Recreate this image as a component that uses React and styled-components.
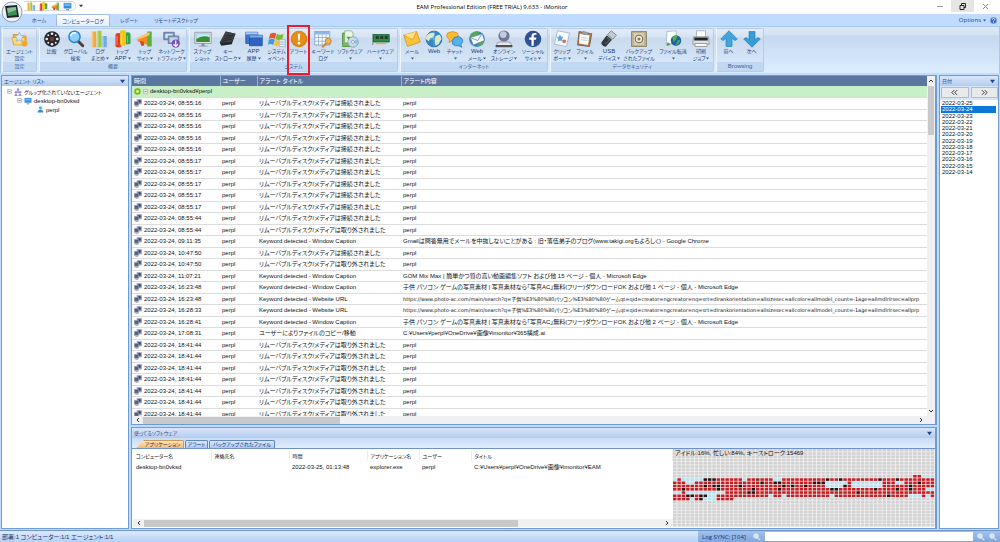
import React from 'react'
import styled, { createGlobalStyle, css } from 'styled-components'

const GlobalStyle = createGlobalStyle`
  * { box-sizing: border-box; }
  body {
    margin: 0;
    overflow: hidden;
    font-family: "Liberation Sans", "Noto Sans CJK JP", sans-serif;
    font-size: 6px;
    line-height: 8px;
    font-feature-settings: "palt";
    color: #111;
  }
  button, input { font: inherit; font-feature-settings: inherit; color: inherit; padding: 0; margin: 0; border: 0; background: none; }
  a { color: inherit; text-decoration: none; }
  ul { list-style: none; margin: 0; padding: 0; }
  svg { display: block; flex: none; }
`

const Window = styled.div`
  position: relative;
  display: flex;
  flex-direction: column;
  height: 100vh;
  background: #bfdbff;
`
const TitleBar = styled.header`
  display: flex;
  height: 14px;
  padding-left: 24px;
  background: #fff;
`
const Orb = styled.button`
  position: absolute;
  left: 1px;
  top: 1px;
  z-index: 2;
`
const QuickAccess = styled.div`
  display: flex;
  align-items: center;
  justify-content: space-around;
  width: 52px;
  height: 10px;
  margin-top: 1px;
  padding: 0 2px;
  border: 1px solid #d4d8de;
  border-left: 0;
  border-radius: 0 5px 5px 0;
`
const More = styled.button`
  width: 10px;
  height: 12px;
  padding-left: 3px;
`
const Title = styled.h1`
  flex: 1;
  margin: 0;
  padding-right: 30px;
  font-family: "Open Sans", sans-serif;
  font-size: 6px;
  font-weight: 400;
  line-height: 14px;
  text-align: center;
  color: #000;
`
const WindowButton = styled.button`
  display: flex;
  align-items: center;
  justify-content: center;
  width: 23px;
  height: 12px;
  background: ${p => (p.$on ? '#e5e5e5' : 'none')};
`
const WindowButtons = styled.div`
  display: flex;
  padding-right: 3px;
`

const TabStrip = styled.nav`
  display: flex;
  height: 12px;
  padding: 0 3px 0 22px;
  color: #1f3f85;
`
const Tab = styled.button`
  width: ${p => p.$w}px;
  height: 12px;
  border-radius: 2px 2px 0 0;
  font-size: 5px;
  ${p => p.$active && css`
    border: 1px solid #9dbde8;
    border-bottom: 0;
    background: linear-gradient(#fff, #e3eefb);
  `}
`
const Options = styled.div`
  display: flex;
  align-items: center;
  gap: 4px;
  margin-left: auto;
`
const OptionsButton = styled.button`
  display: flex;
  align-items: center;
  gap: 2px;
  font-family: "Open Sans", sans-serif;
`

const Ribbon = styled.div`
  display: flex;
  gap: 2px;
  height: 47px;
  padding: 1px;
  border: 1px solid #a9c8ee;
  border-width: 1px 1px 0;
  background: linear-gradient(#dde8f5 0, #d3e1f1 8px, #c6d8ee 9px, #dbedff 100%);
`
const Group = styled.section`
  display: flex;
  flex-direction: column;
  border: 1px solid #b4cdea;
  border-left-color: #edf5fe;
  border-radius: 2px;
  background: linear-gradient(#e3ecf7 0, #d6e3f2 8px, #c9daee 9px, #d9eafc 100%);
`
const GroupButtons = styled.div`
  display: flex;
  flex: 1;
`
const GroupName = styled.div`
  height: 9px;
  line-height: 9px;
  background: #c1d8f2;
  color: #3d5f9f;
  font-size: ${p => (p.$latin ? 6 : 5)}px;
  text-align: center;
`
const Tool = styled.button`
  position: relative;
  display: flex;
  flex-direction: column;
  align-items: center;
  justify-content: flex-start;
  width: ${p => p.$w}px;
  padding-top: 1px;
  line-height: 7px;
  color: #1f3f85;
  white-space: nowrap;
`
const ToolLine = styled.span`
  display: flex;
  align-items: center;
  justify-content: center;
  gap: 1px;
  height: 7px;
  font-size: ${p => (p.$latin ? 6 : 5)}px;
`
const Highlight = styled.span`
  position: absolute;
  left: 0;
  top: -4px;
  z-index: 1;
  width: 23px;
  height: 50px;
  border: 2px solid #ec1c2c;
`

const Workspace = styled.main`
  display: flex;
  gap: 2px;
  flex: 1;
  min-height: 0;
  padding: 2px 1px 1px;
`
const Panel = styled.section`
  display: flex;
  flex-direction: column;
  min-width: 0;
  min-height: 0;
  width: ${p => p.$w || 'auto'};
  flex: ${p => p.$flex || 'none'};
  border: 1px solid #6f9bd6;
  border-right-width: ${p => (p.$thick ? '2px' : '1px')};
  background: #fff;
`
const PanelTitle = styled.div`
  display: flex;
  align-items: center;
  justify-content: space-between;
  flex: none;
  height: 10px;
  padding: 0 3px 0 2px;
  background: linear-gradient(#d8e6fa, #b3cdee);
  font-size: 5px;
  color: #24478f;
`
const Tree = styled.ul`
  padding: 1px 0 0 5px;
`
const TreeItem = styled.li`
  display: flex;
  align-items: center;
  gap: 2px;
  height: 9px;
  padding-left: ${p => p.$level * 10}px;
  font-size: ${p => (p.$level ? 6 : 5)}px;
  white-space: nowrap;
`

const Center = styled.div`
  display: flex;
  flex-direction: column;
  flex: 1;
  gap: 2px;
  min-width: 0;
`
const LogArea = styled.div`
  display: grid;
  grid-template-columns: 1fr 8px;
  grid-template-rows: 1fr 8px;
  flex: 1;
  min-height: 0;
`
const TableClip = styled.div`
  min-width: 0;
  min-height: 0;
  overflow: hidden;
`
const LogTable = styled.table`
  width: 100%;
  table-layout: fixed;
  border-collapse: collapse;
  white-space: nowrap;
  th {
    height: 10px;
    padding: 0 0 0 2px;
    border-left: 1px solid #9db0cf;
    background: #5c779f;
    color: #fff;
    font-weight: 400;
    line-height: 10px;
    text-align: left;
  }
  th:first-child { border-left: 0; }
  td {
    height: 12px;
    padding: 0 0 0 2px;
    border-bottom: 1px solid #dcdcdc;
    line-height: 10px;
    overflow: hidden;
  }
  tbody tr:nth-child(odd) td { height: 11px; }
`
const Col = styled.col`
  width: ${p => (p.$w ? p.$w + 'px' : 'auto')};
`
const GroupRow = styled.tr`
  td { background: #c9efc6; }
`
const Address = styled.span`
  font-family: "DejaVu Sans", "Noto Sans CJK JP", sans-serif;
  font-size: 5px;
`
const IconCell = styled.div`
  display: flex;
  align-items: center;
  gap: 2px;
`
const BarV = styled.div`
  display: flex;
  flex-direction: column;
  align-items: center;
  justify-content: space-between;
  padding: 2px 0;
  background: #f0f0f0;
`
const BarH = styled.div`
  display: flex;
  align-items: center;
  height: 8px;
  padding: 0 3px;
  background: #f0f0f0;
`
const ThumbV = styled.div`
  width: 6px;
  height: 49px;
  margin: 2px 0 auto;
  background: #c9c9c9;
`
const ThumbH = styled.div`
  width: ${p => p.$w};
  height: 7px;
  margin: 0 auto 0 2px;
  background: #c9c9c9;
`

const LowerTabs = styled.div`
  display: flex;
  gap: 1px;
  flex: none;
  height: 11px;
  padding: 2px 0 0 4px;
  border-bottom: 1px solid #6f93c8;
  background: linear-gradient(#c9dcf5, #e1edfc);
`
const LowerTab = styled.button`
  height: 8px;
  width: ${p => p.$w}px;
  border-radius: 2px 2px 0 0;
  border: 1px solid #5f86c4;
  border-bottom: 0;
  background: linear-gradient(#dbe9fc, #a9c8f2);
  font-size: 5px;
  line-height: 7px;
  color: #0f2d69;
  white-space: nowrap;
  ${p => p.$active && css`
    padding-left: 6px;
    border-color: #c99a5a;
    border-left: 0;
    background: linear-gradient(#ffe2b5, #fbbb6a);
    clip-path: polygon(8px 0, 100% 0, 100% 100%, 0 100%);
  `}
`
const LowerBody = styled.div`
  display: flex;
  flex: 1;
  min-height: 0;
  padding: 0 0 1px 1px;
`
const LowerTableArea = styled.div`
  display: flex;
  flex-direction: column;
  flex: 1;
  min-width: 0;
  padding-top: 1px;
`
const AppTable = styled.table`
  width: 100%;
  margin-bottom: auto;
  table-layout: fixed;
  border-collapse: collapse;
  white-space: nowrap;
  th, td {
    height: 11px;
    padding: 0 0 0 3px;
    font-weight: 400;
    text-align: left;
  }
  th {
    border-right: 1px solid #ededed;
    font-size: 5px;
  }
`
const Activity = styled.div`
  position: relative;
  width: 262px;
  background: #f1f1f1;
`
const ActivityLabel = styled.div`
  position: absolute;
  left: 2px;
  top: 0;
`

const DateNav = styled.div`
  display: flex;
  gap: 2px;
  flex: none;
  padding: 1px 0 2px 1px;
  background: #d6e5fa;
`
const DateButton = styled.button`
  display: flex;
  align-items: center;
  justify-content: center;
  flex: 1;
  height: 11px;
  border: 1px solid #b5bcc6;
  background: #e9eaec;
`
const DateList = styled.ul`
  display: grid;
  grid-template-rows: repeat(12, 1fr);
  height: 75px;
  margin: 0 2px 0 1px;
`
const DateItem = styled.li`
  padding-left: 1px;
  line-height: 6px;
  background: ${p => (p.$on ? '#0b78d7' : 'transparent')};
  color: ${p => (p.$on ? '#fff' : '#111')};
`

const StatusBar = styled.footer`
  display: flex;
  flex: none;
  height: 12px;
  border-top: 1px solid #6f93c8;
  background: linear-gradient(#dcebff, #b6d0f4);
  line-height: 12px;
  color: #17356f;
`
const StatusText = styled.div`
  flex: 1;
  padding-left: 2px;
`
const SyncArea = styled.label`
  display: flex;
  align-items: center;
  gap: 4px;
  width: 302px;
  padding: 0 3px 0 4px;
  background: linear-gradient(#a3c2ec, #7ea7df);
`
const SyncName = styled.span`
  width: 47px;
  font-family: "Open Sans", sans-serif;
`
const SyncInput = styled.input`
  flex: 1;
  min-width: 0;
  height: 9px;
  background: #fff;
`

const icons = {
  agent: <><path d="M3 6h7l2 2h8v11H3z" fill="#f2b33a" stroke="#d18c1c" /><path d="M1 10h17l3 10H4z" fill="#fbd878" stroke="#dea036" /><path d="m11 3 2 4 4 1-3 3 1 4-4-2-4 2 1-4-3-3 4-1z" fill="#d6e9fb" stroke="#85add9" /><circle cx="18" cy="18" r="4" fill="#f6a62c" /></>,
  reel: <><circle cx="12" cy="12" r="10.500" fill="#24272c" /><g fill="#e6ebf2"><circle cx="12" cy="5" r="1.800" /><circle cx="12" cy="19" r="1.800" /><circle cx="5" cy="12" r="1.800" /><circle cx="19" cy="12" r="1.800" /><circle cx="7" cy="7" r="1.300" /><circle cx="17" cy="7" r="1.300" /><circle cx="7" cy="17" r="1.300" /><circle cx="17" cy="17" r="1.300" /></g><circle cx="12" cy="12" r="3" fill="#6c3e2b" /></>,
  search: <><path d="m14 14 7 7" stroke="#4b423f" strokeWidth="4" strokeLinecap="round" /><circle cx="10" cy="9" r="7.500" fill="#8fd0fa" stroke="#2b83cd" strokeWidth="2" /><path d="M5 8a5 5 0 0 1 7-4" stroke="#fff" strokeWidth="2" fill="none" /></>,
  logs: <><path d="M1 2h6v21H1z" fill="#f4a83c" /><path d="M8 1h6v22H8z" fill="#9bcc36" /><path d="M15 8h6v15h-6z" fill="#70a9e6" /><path d="M1 2h2v21H1zM8 1h2v22H8zM15 8h2v15h-2z" fill="#fff" opacity=".35" /></>,
  topapp: <><path d="M2 7a4 3 0 0 1 8 0v14a4 2 0 0 1-8 0z" fill="#e8392b" /><path d="M14 6a4 3 0 0 1 8 0v11a4 2 0 0 1-8 0z" fill="#35a544" /><path d="M8 3a4 3 0 0 1 8 0v16a4 2 0 0 1-8 0z" fill="#f4c51e" /><path d="M4 8v12M10 5v14M18 8v9" stroke="#fff" opacity=".5" /></>,
  topsite: <><path d="M2 11 18 3v18L2 15z" fill="#f38b25" /><path d="M15 2h6v20h-6z" fill="#5caf3a" /><path d="M2 11 18 3v4L2 13z" fill="#fbc36c" /><path d="M5 15h5l1 6H7z" fill="#d64524" /></>,
  network: <><path d="M1 3h14v10H1z" fill="#7c95bb" stroke="#55698f" /><path d="M3 5h10v6H3z" fill="#cfe3f7" /><path d="M7 8h14v10H7z" fill="#8fa4c4" stroke="#55698f" /><path d="M9 10h10v6H9z" fill="#bfd7f0" /><circle cx="17" cy="18" r="5.500" fill="#7b50b8" /><path d="M17 14v8M14 19l3 3 3-3" stroke="#fff" fill="none" strokeWidth="1.500" /></>,
  snapshot: <><path d="M1 3h22v15H1z" fill="#dfe4e8" stroke="#848d93" /><path d="M3 5h18v11H3z" fill="#3c8c33" /><path d="M3 5h18v5q-9-4-18 2z" fill="#bde7fa" /><path d="M10 18h4v3h4v1H6v-1h4z" fill="#899097" /></>,
  key: <><path d="M9 2 22 5l-5 14-14 2-2-4z" fill="#23262a" /><path d="M9 2 22 5l-5 11-16 1z" fill="#3e4248" /><path d="m6 12 12-3M4 15l13-3M8 8l12-1" stroke="#24262b" /></>,
  app: <><path d="M1 3h16v15H1z" fill="#3c74ce" stroke="#244f9c" /><path d="M1 3h16v3H1z" fill="#a8caf3" /><path d="M6 7h17v14H6z" fill="#2f63c2" stroke="#1e4793" /><path d="M6 7h17v3H6z" fill="#7aa9e8" /></>,
  windows: <><path d="M3 5q5-3 8 0l-2 7q-4-3-8 0z" fill="#e8572d" /><path d="M12 5q4 3 9 0l-2 7q-5 3-9 0z" fill="#7fba34" /><path d="M1 13q4-3 8 0l-2 7q-4-3-7 0z" fill="#4298de" /><path d="M10 13q4 3 9 0l-2 7q-5 3-9 0z" fill="#f8c32c" /><path d="M15 13h8v9h-8z" fill="#f4f7fb" stroke="#9caabd" /><path d="M16 16h6M16 19h6" stroke="#6a95cf" /></>,
  alert: <><circle cx="12" cy="12" r="11" fill="#d9820f" /><circle cx="12" cy="11" r="9.500" fill="#e28e18" /><path d="M10.500 5h3l-.5 9h-2z" fill="#fff" /><circle cx="12" cy="17.500" r="1.700" fill="#fff" /></>,
  keyword: <><path d="M1 2h20v18H1z" fill="#f8fbff" stroke="#6e94c5" /><path d="M1 2h20v4H1z" fill="#8db7e8" /><path d="M1 10h20M1 15h20M6 6v14M11 6v14M16 6v14" stroke="#8ba8cb" /><circle cx="19" cy="15" r="4" fill="#f2b34c" stroke="#b7761d" /><path d="m16 18-5 5" stroke="#c98a2d" strokeWidth="2.500" /></>,
  software: <><path d="M2 4h12v18H2z" fill="#6fbd57" stroke="#458b3a" /><path d="M5 1h9l2 3v13H5z" fill="#eaf5e5" stroke="#84a77c" /><path d="M7 9h6l-3 4z" fill="#4aa336" /><circle cx="16" cy="16" r="7" fill="#c9dbeb" stroke="#7897b7" /><path d="m16 16 6-4a7 7 0 0 1 0 7z" fill="#85c4e8" /><circle cx="16" cy="16" r="2" fill="#fff" stroke="#8192a5" /></>,
  hardware: <><path d="M0 5h2v15H0z" fill="#96a0a6" /><path d="M2 6h21v10H2z" fill="#2b8e48" stroke="#14542a" /><path d="M5 8h4v4H5zM11 8h4v4h-4zM17 8h4v4h-4z" fill="#243b32" /><path d="M5 17h14v2H5z" fill="#d7b548" /></>,
  mail: <><path d="m1 7 17-5 5 14-17 6z" fill="#fbc437" stroke="#d38b19" /><path d="m1 7 12 6 5-11" fill="#fde084" stroke="#d89626" /></>,
  web: <><circle cx="12" cy="12" r="10.500" fill="#2f88c9" stroke="#1d5e98" /><path d="M5 5q6-3 8 0l-2 5-4 1-2 4-4-3q0-5 4-7M14 8l6-2 2 6-4 7-4 2-1-6z" fill="#dceacb" /><path d="M12 2v20M2 12h20" stroke="#bce0f7" opacity=".6" /></>,
  chat: <><path d="M2 4q7-4 13 0 4 5 0 9-4 2-7 1l-4 3 1-4Q-1 9 2 4" fill="#f9bc32" stroke="#d98a1c" /><path d="M11 10q6-3 10 1 3 5-1 8l1 4-4-2q-5 1-8-2-3-5 2-9" fill="#54b1ec" stroke="#2577bd" /></>,
  webmail: <><circle cx="12" cy="12" r="10.500" fill="#3b83bf" /><path d="M3 6q7-6 12-3l-3 5-9 5zM15 16l7-4-3 8-7 2z" fill="#54ab52" /><path d="m3 10 16-5 3 9-15 6z" fill="#f6faff" stroke="#5d84ab" /><path d="m3 10 10 4 6-9" fill="none" stroke="#5d84ab" /></>,
  storage: <><circle cx="12" cy="8" r="7.500" fill="#707796" /><circle cx="11" cy="6" r="4.500" fill="#c2cadd" /><path d="M4 16h16l3 6H1z" fill="#e3e6ea" stroke="#8b9298" /><path d="M1 20h22v3H1z" fill="#4b5157" /></>,
  facebook: <><circle cx="12" cy="12" r="11" fill="#31508f" /><path d="M13 21v-8h3l.5-3H13V8q0-2 3.500-1.500V4Q10 3 10 8v2H7v3h3v8z" fill="#fff" /></>,
  clip: <><path d="m6 1 16 3-4 18L2 19z" fill="#fafcff" stroke="#91aacd" /><path d="m9 6 2 3 3 0-2 3 1 3-4-1-3 2 1-4-2-3h3z" fill="#62a3df" /><circle cx="15" cy="15" r="2.500" fill="#e36e41" /></>,
  file: <><path d="m4 2 17 3-3 17-16-2z" fill="#a97a54" stroke="#76502f" /><path d="m5 5 13 2-2 13-12-2z" fill="#fafafa" /><path d="m9 1 7 2-1 4-7-1z" fill="#969ca3" /><path d="m7 10 8 1M7 13l8 1" stroke="#b6bcc6" /></>,
  usb: <><path d="m15 1 7 6-5 5-7-6z" fill="#c5cbd1" stroke="#6b7075" /><path d="m9 7 7 6-8 9q-3 1-6-3-1-2 1-4z" fill="#333940" /><path d="m9 10 4 3-6 6" stroke="#777f88" fill="none" /></>,
  backup: <><path d="M2 2h20v20H2z" fill="#b9ae8e" stroke="#81775a" /><path d="M5 4h14v16H5z" fill="#d7cfb4" /><circle cx="12" cy="12" r="5" fill="#eee9d5" stroke="#766d52" strokeWidth="1.500" /><circle cx="12" cy="12" r="2" fill="#827758" /></>,
  transfer: <><path d="m4 2 12-1 1 16-14 2z" fill="#fcfdfe" stroke="#9eafc3" /><circle cx="16" cy="14" r="7" fill="#205fae" /><path d="M11 10q4-5 7-2l-2 5-3 3zM18 14l4-1-3 6-3 1z" fill="#52b147" /><path d="m3 21 2-5 4 4z" fill="#49a43f" /></>,
  print: <><path d="M6 1h12v9H6z" fill="#fff" stroke="#9ca3aa" /><path d="M2 9h20l1 10H1z" fill="#dde1e4" stroke="#858b90" /><path d="M3 10h18v4H3z" fill="#22262b" /><path d="M4 18h16v4H4z" fill="#f8f8f8" stroke="#888" /></>,
  up: <path d="M12 1 23 12l-3 2-4-3v11H8V11l-4 3-3-2z" fill="#41a6dc" stroke="#2b86bd" />,
  down: <path d="M12 23 1 12l3-2 4 3V2h8v11l4-3 3 2z" fill="#369cd6" stroke="#2b86bd" />,
  monitor: <><path d="M2 3h20v14H2z" fill="#2c8ae0" stroke="#7aa6d0" /><path d="M4 5h16v6H4z" fill="#65b8f3" /><path d="M8 19h8v3H8z" fill="#7c8c9b" /></>,
  group: <><circle cx="12" cy="5" r="4" fill="#8aa0dc" /><path d="M6 14q6-9 12 0z" fill="#7084cd" /><circle cx="6" cy="13" r="4" fill="#a78bc9" /><circle cx="18" cy="13" r="4" fill="#a78bc9" /><path d="M0 23q6-10 12 0q6-10 12 0z" fill="#8577c1" /></>,
  user: <><circle cx="12" cy="7" r="6" fill="#57b6ee" /><path d="M2 22q1-9 10-9t10 9z" fill="#2e8fd6" /></>,
  screens: <><path d="M9 1h14v14H9z" fill="#8c9ac4" stroke="#a7a7ad" strokeWidth="2" /><path d="M12 4h8v7h-8z" fill="#26366f" /><path d="M1 7h13v12H1z" fill="#54617e" stroke="#a2a7b5" strokeWidth="2" /><path d="M4 20h9v3H4z" fill="#899" /></>,
  plus: <><circle cx="12" cy="12" r="11" fill="#74b91c" /><circle cx="12" cy="12" r="5" fill="#e3fa9e" /></>,
  help: <><circle cx="12" cy="12" r="11" fill="#3264c2" stroke="#9eb9e6" strokeWidth="2" /><path d="M8 9q0-4 4-4t4 4q0 2-4 5v2M12 18v2" fill="none" stroke="#fff" strokeWidth="3" /></>,
  find: <><path d="m14 14 8 8" stroke="#e8dcc0" strokeWidth="4" /><circle cx="9" cy="9" r="7" fill="#cfe3f8" stroke="#eef4fb" strokeWidth="2" /></>,
  expand: <><path d="M3 3h18v18H3z" fill="#fff" stroke="#8c96a3" strokeWidth="3" /><path d="M7 12h10" stroke="#445" strokeWidth="3" /></>,
  prev: <path d="M11 4 3 12l8 8M21 4l-8 8 8 8" stroke="#222" strokeWidth="3" />,
  next: <path d="m3 4 8 8-8 8M13 4l8 8-8 8" stroke="#222" strokeWidth="3" />,
}

const Icon = ({ name, size = 18 }) => (
  <svg width={size} height={size} viewBox="0 0 24 24" fill="none">{icons[name]}</svg>
)
const Caret = ({ w = 3, color = '#34528f' }) => (
  <svg width={w} height={w} viewBox="0 0 6 6"><path d="M0 1h6L3 5z" fill={color} /></svg>
)
const chevrons = { up: 'M1 4l2-2 2 2', down: 'M1 2l2 2 2-2', left: 'M4 1L2 3l2 2', right: 'M2 1l2 2-2 2' }
const Chevron = ({ dir }) => (
  <svg width="6" height="6" viewBox="0 0 6 6"><path d={chevrons[dir]} fill="none" stroke="#333" /></svg>
)

const isLatin = text => /^[A-Za-z]/.test(text)

// [icon, button width, label lines, has drop-down]
const groups = [
  ['設定', [['agent', 33, ['エージェント', '設定']]]],
  ['概要', [
    ['reel', 23, ['比較']],
    ['search', 25, ['グローバル', '検索']],
    ['logs', 24, ['ログ', 'まとめ'], 1],
    ['topapp', 21, ['トップ', 'APP'], 1],
    ['topsite', 24, ['トップ', 'サイト'], 1],
    ['network', 29, ['ネットワーク', 'トラフィック'], 1],
  ]],
  ['システム', [
    ['snapshot', 25, ['スナップ', 'ショット']],
    ['key', 26, ['キー', 'ストローク'], 1],
    ['app', 25, ['APP', '履歴'], 1],
    ['windows', 21, ['システム', 'イベント']],
    ['alert', 23, ['アラート']],
    ['keyword', 26, ['キーワード', 'ログ']],
    ['software', 28, ['ソフトウェア'], 1],
    ['hardware', 33, ['ハードウェア'], 1],
  ]],
  ['インターネット', [
    ['mail', 22, ['メール'], 1],
    ['web', 22, ['Web']],
    ['chat', 20, ['チャット'], 1],
    ['webmail', 24, ['Web', 'メール'], 1],
    ['storage', 30, ['オンライン', 'ストレージ'], 1],
    ['facebook', 28, ['ソーシャル', 'サイト'], 1],
  ]],
  ['データセキュリティ', [
    ['clip', 22, ['クリップ', 'ボード'], 1],
    ['file', 24, ['ファイル'], 1],
    ['usb', 24, ['USB', 'デバイス'], 1],
    ['backup', 36, ['バックアップ', 'されたファイル']],
    ['transfer', 32, ['ファイル転送'], 1],
    ['print', 24, ['印刷', 'ジョブ'], 1],
  ]],
  ['Browsing', [['up', 23, ['前へ']], ['down', 23, ['次へ']]]],
]

const plugged = 'リムーバブルディスク/メディアは接続されました'
const unplugged = 'リムーバブルディスク/メディアは取り外されました'
const caption = 'Keyword detected - Window Caption'
const website = 'Keyword detected - Website URL'
const photoUrl = 'https://www.photo-ac.com/main/search?q=子供%E3%80%80パソコン%E3%80%80ゲームqt=qid=creator=ngcreator=nq=srt=dlrankorientation=allsizesec=allcolor=allmodel_count=-1age=allmdlrlrsec=allprp'

const logs = [
  ...Array(5).fill(['08:55:16', plugged, 'perpl']),
  ...Array(5).fill(['08:55:17', plugged, 'perpl']),
  ['08:55:44', plugged, 'perpl'],
  ['08:55:44', unplugged, 'perpl'],
  ['09:11:35', caption, 'Gmailは問答無用でメールを中抜しないことがある : 旧・落伍弟子のブログ(www.takigi.orgもよろしく) - Google Chrome'],
  ['10:47:50', plugged, 'perpl'],
  ['10:47:50', unplugged, 'perpl'],
  ['11:07:21', caption, 'GOM Mix Max | 簡単かつ質の高い動画編集ソフト および他 15 ページ - 個人 - Microsoft Edge'],
  ['16:23:48', caption, '子供 パソコン ゲームの写真素材 | 写真素材なら「写真AC」無料(フリー)ダウンロードOK および他 1 ページ - 個人 - Microsoft Edge'],
  ['16:23:48', website, photoUrl],
  ['16:28:33', website, photoUrl],
  ['16:28:41', caption, '子供 パソコン ゲームの写真素材 | 写真素材なら「写真AC」無料(フリー)ダウンロードOK および他 2 ページ - 個人 - Microsoft Edge'],
  ['17:08:31', 'ユーザーによりファイルのコピー/移動', 'C:¥Users¥perpl¥OneDrive¥画像¥imonitor¥365構成.ai'],
  ...Array(7).fill(['18:41:44', unplugged, 'perpl']),
]

const dates = [25, 24, 23, 22, 21, 20, 19, 18, 17, 16, 15, 14]

// one row per hour from 08:00, one cell per minute
const activity = [
  '.......................................................rrbbb',
  'brbbbbbkkkrrrrrrbrrdrrrbbrrrrrrrrrrkrrkrrrrrrrrkrrrkrrrrrrrr',
  'rrrbbrrrrrrrrrrrrrrrkrrkkrrrrrrrkkkbbbbbrbbbbbbbrrrbbrrrkrrr',
  'rrrrrrrkrkkrrrrkrrrrrrrrrkrkrrkrrrrbbbbkrbbbbbbbrrrrrrkrrrrr',
  'rrkrrrrrrrkrrrrrrrkrrrrrkrrrrrrrrrrrkkrrrrrrrrkrrrrkrrkrrrbb',
  'bbrbbbbbbbbbrrrrrkkrrrrrrrrrrrrrrrrrrrrrrrkrrrrrrrrrrrrrrrrr',
  'rrrkkrkkbbrrrrrrrrrrrrbrrbrrrrrrrrrrbrrrrrrrrrrrrkrrrrbbbrbr',
  'rrrrbrkbbbrrrr..............................................',
]
const cellColors = { r: '#c51f24', k: '#2a1215', b: '#b5e2f5', d: '#6b3a26', '.': '#d2d2d2' }

const ActivityMap = () => (
  <svg width="100%" height="100%" viewBox="0 0 600 240" preserveAspectRatio="none">
    {Array.from({ length: 24 }, (_, y) =>
      Array.from({ length: 60 }, (_, x) => {
        const c = activity[y - 8]?.[x] || '.'
        return <rect key={x + '-' + y} x={x * 10} y={y * 10} width="8" height="8" fill={cellColors[c]} />
      })
    )}
  </svg>
)

function ToolButton({ tool: [icon, width, lines, drop] }) {
  return (
    <Tool $w={width}>
      <Icon name={icon} />
      {lines.map((line, i) => (
        <ToolLine key={line} $latin={isLatin(line)}>{line}{drop && i === 1 ? <Caret /> : null}</ToolLine>
      ))}
      {drop && lines.length === 1 ? <ToolLine><Caret /></ToolLine> : null}
      {icon === 'alert' && <Highlight />}
    </Tool>
  )
}

function LogPanel() {
  return (
    <Panel $flex="1" $thick>
      <LogArea>
        <TableClip>
          <LogTable>
            <colgroup><Col $w={88} /><Col $w={37} /><Col $w={144} /><Col /></colgroup>
            <thead>
              <tr><th>時間</th><th>ユーザー</th><th>アラート タイトル</th><th>アラート内容</th></tr>
            </thead>
            <tbody>
              <GroupRow>
                <td colSpan="4"><IconCell><Icon name="plus" size={7} /><Icon name="expand" size={5} />desktop-bn0vksd¥perpl</IconCell></td>
              </GroupRow>
              {logs.map(([time, title, content], i) => (
                <tr key={i}>
                  <td><IconCell><Icon name="screens" size={8} />2022-03-24, {time}</IconCell></td>
                  <td>perpl</td>
                  <td>{title}</td>
                  <td>{title === website ? <Address>{content}</Address> : content}</td>
                </tr>
              ))}
            </tbody>
          </LogTable>
        </TableClip>
        <BarV><Chevron dir="up" /><ThumbV /><Chevron dir="down" /></BarV>
        <BarH><Chevron dir="left" /><ThumbH $w="25%" /><Chevron dir="right" /></BarH>
        <BarH />
      </LogArea>
    </Panel>
  )
}

const LowerPanel = styled(Panel)`
  height: 102px;
`

function UsagePanel() {
  return (
    <LowerPanel $thick>
      <PanelTitle>使ってるソフトウェア<Caret w={5} color="#1d4595" /></PanelTitle>
      <LowerTabs>
        <LowerTab $w={48} $active>アプリケーション</LowerTab>
        <LowerTab $w={23}>アラート</LowerTab>
        <LowerTab $w={66}>バックアップされたファイル</LowerTab>
      </LowerTabs>
      <LowerBody>
        <LowerTableArea>
          <AppTable>
            <colgroup><Col $w={78} /><Col $w={78} /><Col $w={78} /><Col $w={52} /><Col $w={52} /><Col /></colgroup>
            <thead>
              <tr><th>コンピューター名</th><th>連絡先名</th><th>時間</th><th>アプリケーション名</th><th>ユーザー</th><th>タイトル</th></tr>
            </thead>
            <tbody>
              <tr><td>desktop-bn0vksd</td><td></td><td>2022-03-25, 01:13:48</td><td>explorer.exe</td><td>perpl</td><td>C:¥Users¥perpl¥OneDrive¥画像¥imonitor¥EAM</td></tr>
            </tbody>
          </AppTable>
          <BarH><Chevron dir="left" /><ThumbH $w="70%" /><Chevron dir="right" /></BarH>
        </LowerTableArea>
        <Activity>
          <ActivityMap />
          <ActivityLabel>アイドル:16%, 忙しい:84%, キーストローク:15469</ActivityLabel>
        </Activity>
      </LowerBody>
    </LowerPanel>
  )
}

function App() {
  return (
    <Window>
      <GlobalStyle />
      <Orb aria-label="menu">
        <svg width="22" height="22" viewBox="0 0 22 22">
          <circle cx="11" cy="11" r="10" fill="#eef1f5" stroke="#8f9aaa" />
          <path d="m4 5 12-1 2 12-12 1z" fill="#22262a" />
          <path d="m6 7 9-1 1 8-9 1z" fill="#3e8f57" />
          <path d="m6 7 9-1v3l-8 3z" fill="#86c296" />
        </svg>
      </Orb>
      <TitleBar>
        <QuickAccess>
          <Icon name="logs" size={9} />
          <Icon name="topapp" size={9} />
          <Icon name="topsite" size={9} />
          <Icon name="monitor" size={9} />
        </QuickAccess>
        <More aria-label="more"><Caret w={4} color="#333" /></More>
        <Title>EAM Professional Edition (FREE TRIAL) 9.633 - iMonitor</Title>
        <WindowButtons>
          <WindowButton aria-label="minimize"><svg width="6" height="6"><path d="M0 3.500h6" stroke="#999" /></svg></WindowButton>
          <WindowButton $on aria-label="restore"><svg width="7" height="7"><path d="M1 2.500h4v4h-4zM2.500 2V.5h4v4H5" fill="none" stroke="#222" /></svg></WindowButton>
          <WindowButton aria-label="close"><svg width="7" height="7"><path d="m1 1 5 5m0-5L1 6" stroke="#888" /></svg></WindowButton>
        </WindowButtons>
      </TitleBar>
      <TabStrip>
        <Tab $w={34}>ホーム</Tab>
        <Tab $w={54} $active>コンピューターログ</Tab>
        <Tab $w={38}>レポート</Tab>
        <Tab $w={56}>リモートデスクトップ</Tab>
        <Options>
          <OptionsButton>Options<Caret /></OptionsButton>
          <Icon name="help" size={7} />
        </Options>
      </TabStrip>
      <Ribbon>
        {groups.map(([name, tools]) => (
          <Group key={name}>
            <GroupButtons>{tools.map(tool => <ToolButton key={tool[0]} tool={tool} />)}</GroupButtons>
            <GroupName $latin={isLatin(name)}>{name}</GroupName>
          </Group>
        ))}
      </Ribbon>
      <Workspace>
        <Panel $w="128px">
          <PanelTitle>エージェント リスト<Caret w={5} color="#1d4595" /></PanelTitle>
          <Tree>
            <TreeItem $level={0}><Icon name="expand" size={5} /><Icon name="group" size={8} />グルップ化されていないエージェント</TreeItem>
            <TreeItem $level={1}><Icon name="expand" size={5} /><Icon name="monitor" size={8} />desktop-bn0vksd</TreeItem>
            <TreeItem $level={3}><Icon name="user" size={7} />perpl</TreeItem>
          </Tree>
        </Panel>
        <Center>
          <LogPanel />
          <UsagePanel />
        </Center>
        <Panel $w="60px">
          <PanelTitle>日付<Caret w={5} color="#1d4595" /></PanelTitle>
          <DateNav>
            <DateButton aria-label="previous"><Icon name="prev" size={7} /></DateButton>
            <DateButton aria-label="next"><Icon name="next" size={7} /></DateButton>
          </DateNav>
          <DateList>
            {dates.map(d => <DateItem key={d} $on={d === 24}>2022-03-{d}</DateItem>)}
          </DateList>
        </Panel>
      </Workspace>
      <StatusBar>
        <StatusText>部署:1 コンピューター:1/1 エージェント:1/1</StatusText>
        <SyncArea>
          <SyncName>Log SYNC: [104]</SyncName>
          <Icon name="find" size={8} />
          <SyncInput />
          <Icon name="find" size={8} />
          <Icon name="find" size={8} />
        </SyncArea>
      </StatusBar>
    </Window>
  )
}

export default App
